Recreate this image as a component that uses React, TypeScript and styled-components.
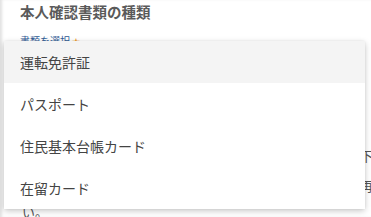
import React, { useState } from 'react'
import styled, { createGlobalStyle } from 'styled-components'

const GlobalStyle = createGlobalStyle`
  html, body {
    margin: 0;
    padding: 0;
    background: #ffffff;
    overflow: hidden;
  }
  body {
    font-family: Roboto, "Noto Sans CJK JP", sans-serif;
  }
`

const Page = styled.div`
  position: relative;
  width: 371px;
  height: 217px;
  overflow: hidden;
  background: #fff;
  box-shadow: inset 3px 0 3px -1px rgba(0, 0, 0, 0.12);
`

const Section = styled.div`
  padding: 4px 0 0 20px;
  display: flex;
  flex-direction: column;
`

const Title = styled.h2`
  margin: 0;
  font-size: 14.5px;
  font-weight: 700;
  line-height: 20px;
  color: #5a5a5a;
`

const Label = styled.div`
  margin-top: 11px;
  font-size: 10px;
  line-height: 14px;
  color: #2f5b95;
  display: flex;
  align-items: center;
  gap: 2px;
`

const Required = styled.span`
  color: #f0a030;
  font-size: 8px;
`

const Field = styled.div`
  margin-top: 4px;
  height: 40px;
  margin-right: 20px;
  border-bottom: 1px solid #ccc;
`

const Notes = styled.div`
  margin-top: 48px;
  display: flex;
  flex-direction: column;
  font-size: 13px;
  color: #555;
`

const NoteLine = styled.div<{ $h: number; $end?: boolean }>`
  height: ${p => p.$h}px;
  line-height: ${p => p.$h}px;
  white-space: nowrap;
  overflow: hidden;
  width: 353px;
  display: flex;
  justify-content: ${p => (p.$end ? 'flex-end' : 'flex-start')};
  padding-left: ${p => (p.$end ? 0 : 2)}px;
`

const Menu = styled.ul`
  position: absolute;
  top: 41px;
  left: 4px;
  width: 361px;
  margin: 0;
  padding: 0;
  list-style: none;
  background: #fff;
  border-radius: 2px;
  box-shadow: 0 2px 6px rgba(0, 0, 0, 0.22), 0 0 2px rgba(0, 0, 0, 0.08);
`

const Item = styled.li<{ $active: boolean }>`
  height: 42px;
  display: flex;
  align-items: center;
  padding-left: 16px;
  font-size: 14px;
  color: #444;
  background: ${p => (p.$active ? '#f4f4f4' : '#fff')};
  cursor: pointer;
`

const options = ['運転免許証', 'パスポート', '住民基本台帳カード', '在留カード']

export default function App() {
  const [active, setActive] = useState(0)

  return (
    <Page>
      <GlobalStyle />
      <Section>
        <Title>本人確認書類の種類</Title>
        <Label>
          書類を選択<Required>★</Required>
        </Label>
        <Field />
        <Notes>
          <NoteLine $h={30} $end>
            <span>選択した書類の写真を撮影してアップロードしてください。以下</span>
          </NoteLine>
          <NoteLine $h={30} $end>
            <span>画像が不鮮明な場合は再</span>
          </NoteLine>
          <NoteLine $h={22}>
            <span>い。</span>
          </NoteLine>
        </Notes>
      </Section>
      <Menu>
        {options.map((o, i) => (
          <Item key={o} $active={i === active} onMouseEnter={() => setActive(i)}>
            {o}
          </Item>
        ))}
      </Menu>
    </Page>
  )
}
